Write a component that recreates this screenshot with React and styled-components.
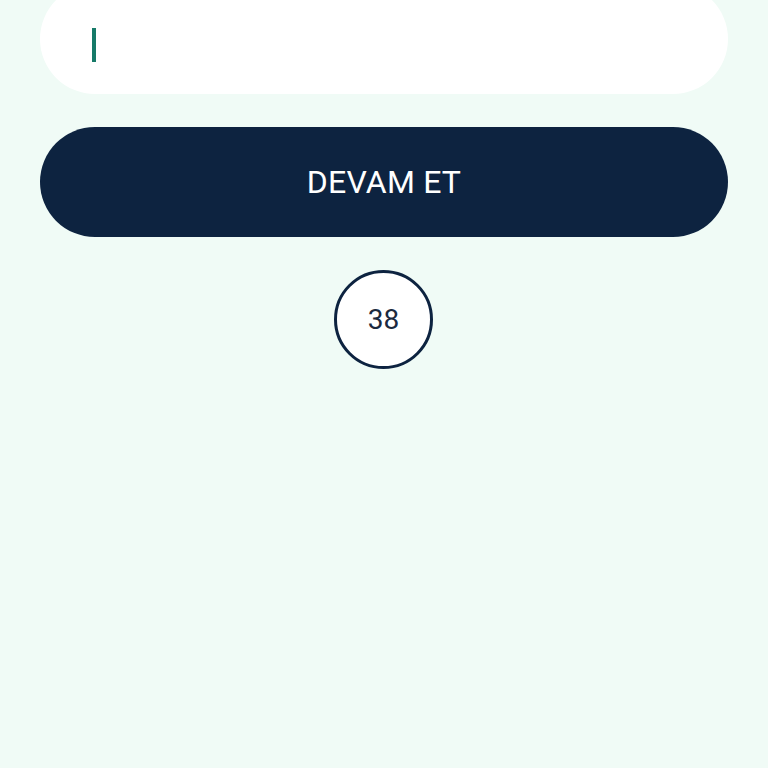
import React from "react";
import styled, { createGlobalStyle } from "styled-components";

const GlobalStyle = createGlobalStyle`
  html, body {
    margin: 0;
    padding: 0;
    background: #f0fbf6;
    font-family: Roboto, "Noto Sans", sans-serif;
  }
`;

const Screen = styled.div`
  min-height: 768px;
  padding: 0 40px;
  box-sizing: border-box;
  display: flex;
  flex-direction: column;
  align-items: stretch;
  overflow: hidden;
`;

const InputBox = styled.div`
  margin-top: -16px;
  height: 110px;
  border-radius: 55px;
  background: #ffffff;
  display: flex;
  align-items: center;
  padding: 12px 0 0 52px;
  box-sizing: border-box;
`;

const Caret = styled.span`
  display: block;
  width: 4px;
  height: 34px;
  background: #167a68;
`;

const ContinueButton = styled.button`
  margin-top: 33px;
  height: 110px;
  border: none;
  border-radius: 55px;
  background: #0d2340;
  color: #ffffff;
  font-family: Roboto, "Noto Sans", sans-serif;
  font-size: 32px;
  letter-spacing: 0.2px;
  cursor: pointer;
`;

const CounterRow = styled.div`
  display: flex;
  justify-content: center;
  margin-top: 33px;
`;

const Counter = styled.div`
  width: 99px;
  height: 99px;
  margin-left: -1px;
  border-radius: 50%;
  border: 3px solid #0d2340;
  box-sizing: border-box;
  background: #ffffff;
  display: flex;
  align-items: center;
  justify-content: center;
  color: #1b2a3f;
  font-size: 28px;
`;

export default function App() {
  return (
    <>
      <GlobalStyle />
      <Screen>
        <InputBox>
          <Caret />
        </InputBox>
        <ContinueButton>DEVAM ET</ContinueButton>
        <CounterRow>
          <Counter>38</Counter>
        </CounterRow>
      </Screen>
    </>
  );
}
